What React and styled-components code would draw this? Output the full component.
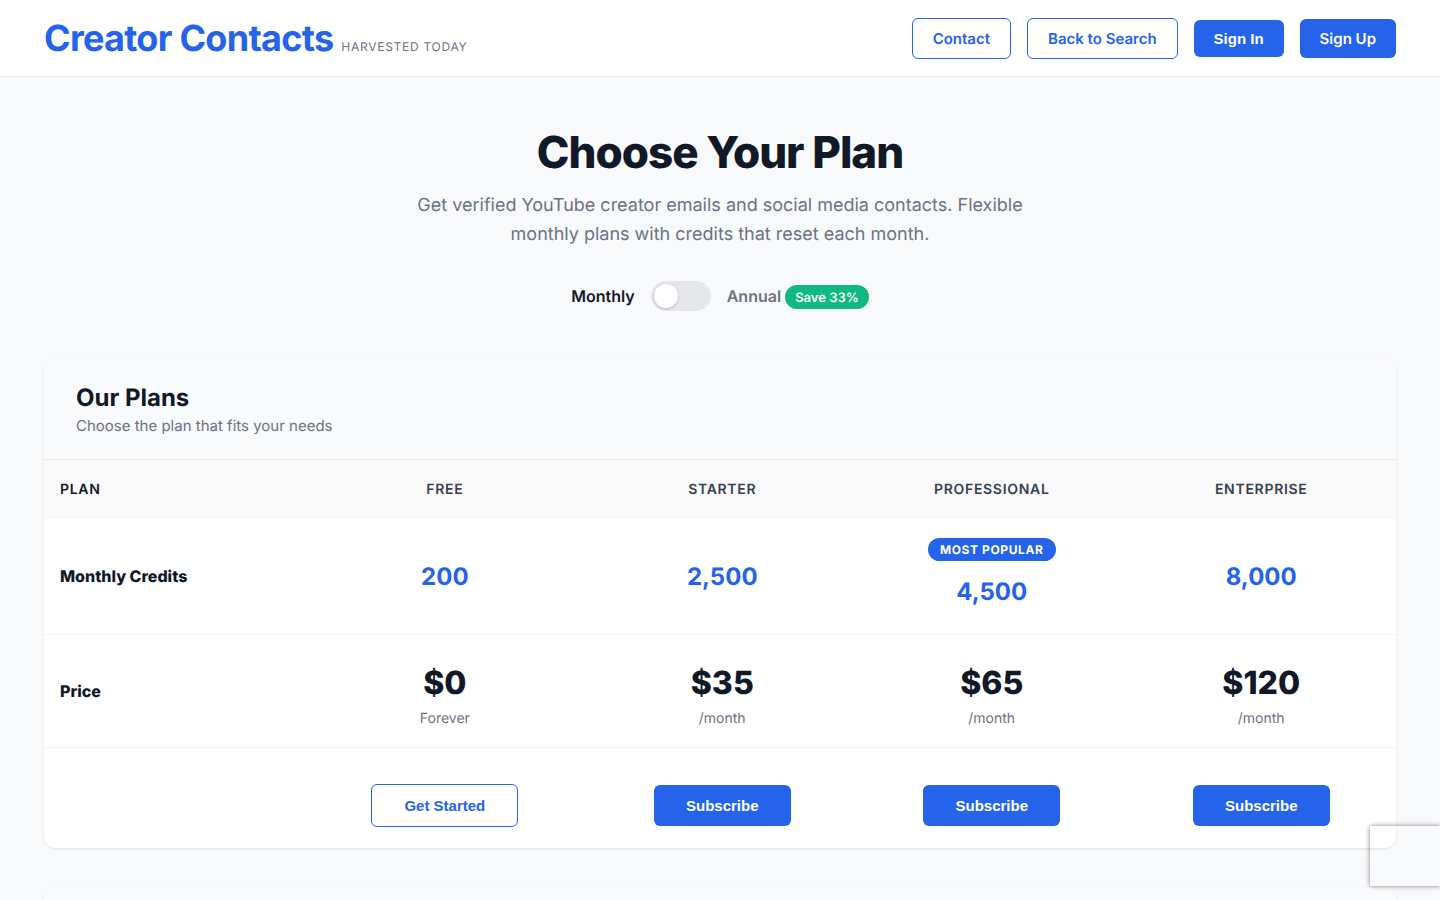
import React, { useState } from 'react'
import styled, { createGlobalStyle, css } from 'styled-components'

const plans = [
  { name: 'Free', credits: '200', price: '$0', period: 'Forever', cta: 'Get Started', outline: true },
  { name: 'Starter', credits: '2,500', price: '$35', period: '/month', cta: 'Subscribe' },
  { name: 'Professional', credits: '4,500', price: '$65', period: '/month', cta: 'Subscribe', popular: true },
  { name: 'Enterprise', credits: '8,000', price: '$120', period: '/month', cta: 'Subscribe' },
]

export default function App() {
  const [annual, setAnnual] = useState(false)

  return (
    <Page>
      <GlobalStyle />
      <Header>
        <Brand>
          <Logo href="#">Creator Contacts</Logo>
          <Tagline>Harvested today</Tagline>
        </Brand>
        <Nav>
          <NavLink href="#contact" $outline>Contact</NavLink>
          <NavLink href="#search" $outline>Back to Search</NavLink>
          <SignIn type="button">Sign In</SignIn>
          <NavLink href="#signup">Sign Up</NavLink>
        </Nav>
      </Header>
      <Main>
        <Hero>
          <Title>Choose Your Plan</Title>
          <Subtitle>
            Get verified YouTube creator emails and social media contacts. Flexible monthly plans
            with credits that reset each month.
          </Subtitle>
          <Billing>
            <BillingLabel htmlFor="billing" $active={!annual}>Monthly</BillingLabel>
            <Toggle
              id="billing"
              type="checkbox"
              role="switch"
              checked={annual}
              onChange={e => setAnnual(e.target.checked)}
            />
            <BillingLabel htmlFor="billing" $active={annual}>
              Annual <SaveBadge>Save 33%</SaveBadge>
            </BillingLabel>
          </Billing>
        </Hero>
        <Card>
          <CardHeader>
            <CardTitle>Our Plans</CardTitle>
            <CardText>Choose the plan that fits your needs</CardText>
          </CardHeader>
          <PlanTable>
            <colgroup>
              <PlanCol $width="19.1%" />
              <PlanCol $width="21.1%" />
              <PlanCol />
              <PlanCol />
              <PlanCol />
            </colgroup>
            <thead>
              <tr>
                <HeadCell scope="col" $first>Plan</HeadCell>
                {plans.map(plan => (
                  <HeadCell scope="col" key={plan.name}>{plan.name}</HeadCell>
                ))}
              </tr>
            </thead>
            <tbody>
              <tr>
                <RowLabel scope="row">Monthly Credits</RowLabel>
                {plans.map(plan => (
                  <Cell key={plan.name}>
                    {plan.popular && <PopularBadge>Most Popular</PopularBadge>}
                    <Credits>{plan.credits}</Credits>
                  </Cell>
                ))}
              </tr>
              <tr>
                <RowLabel scope="row">Price</RowLabel>
                {plans.map(plan => (
                  <Cell key={plan.name}>
                    <Price>{plan.price}</Price>
                    <Period>{plan.period}</Period>
                  </Cell>
                ))}
              </tr>
              <tr>
                <ActionCell />
                {plans.map(plan => (
                  <ActionCell key={plan.name}>
                    <PlanButton type="button" $outline={plan.outline}>{plan.cta}</PlanButton>
                  </ActionCell>
                ))}
              </tr>
            </tbody>
          </PlanTable>
        </Card>
        <Card>
          <CardHeader />
        </Card>
      </Main>
      <CaptchaBadge />
    </Page>
  )
}

const GlobalStyle = createGlobalStyle`
  * {
    box-sizing: border-box;
    margin: 0;
    padding: 0;
  }
  body {
    font-family: Inter, "Liberation Sans", sans-serif;
    font-size: 16px;
    text-rendering: geometricPrecision;
    color: #111827;
    background: #f8f9fb;
  }
`

const Page = styled.div`
  height: 100vh;
  overflow: hidden;
`

const Header = styled.header`
  display: flex;
  justify-content: space-between;
  align-items: center;
  padding: 16px 44px;
  background: white;
  border-bottom: 1px solid #e5e7eb;
`

const Brand = styled.div`
  display: flex;
  align-items: baseline;
  gap: 8px;
`

const Logo = styled.a`
  font-size: 36px;
  font-weight: 700;
  line-height: 44px;
  letter-spacing: -0.02em;
  color: #2563eb;
  text-decoration: none;
`

const Tagline = styled.span`
  font-size: 12px;
  letter-spacing: 0.06em;
  text-transform: uppercase;
  color: #6b7280;
`

const Nav = styled.nav`
  display: flex;
  align-items: center;
  gap: 16px;
`

const outlined = css`
  color: #2563eb;
  background: white;
  border: 1px solid #2563eb;
`

const filled = css`
  color: white;
  background: #2563eb;
  border: none;
`

const NavLink = styled.a`
  padding: 10px 20px;
  font-size: 15px;
  font-weight: 600;
  line-height: 19px;
  border-radius: 6px;
  text-decoration: none;
  ${props => (props.$outline ? outlined : filled)}
`

const SignIn = styled.button`
  padding: 10px 20px;
  font-family: "Liberation Sans", Arial, sans-serif;
  font-size: 15px;
  font-weight: 600;
  line-height: 17px;
  border-radius: 6px;
  cursor: pointer;
  ${filled}
`

const Main = styled.main`
  padding: 48px 44px 0;
`

const Hero = styled.section`
  display: flex;
  flex-direction: column;
  align-items: center;
  margin-bottom: 48px;
  text-align: center;
`

const Title = styled.h1`
  margin-bottom: 11px;
  font-size: 44px;
  font-weight: 800;
  line-height: 55px;
  letter-spacing: -1px;
`

const Subtitle = styled.p`
  max-width: 640px;
  margin-bottom: 32px;
  font-size: 18px;
  line-height: 29px;
  color: #6b7280;
`

const Billing = styled.div`
  display: flex;
  align-items: center;
  gap: 16px;
`

const BillingLabel = styled.label`
  font-weight: 600;
  line-height: 26px;
  color: ${props => (props.$active ? '#111827' : '#6b7280')};
`

const Toggle = styled.input`
  appearance: none;
  width: 60px;
  height: 30px;
  padding: 3px;
  border-radius: 15px;
  background: ${props => (props.checked ? '#2563eb' : '#e5e7eb')};
  cursor: pointer;

  &::before {
    content: '';
    display: block;
    width: 24px;
    height: 24px;
    margin-left: ${props => (props.checked ? '30px' : '0')};
    border-radius: 50%;
    background: white;
    box-shadow: 0 1px 3px rgba(0, 0, 0, 0.2);
  }
`

const SaveBadge = styled.span`
  display: inline-block;
  padding: 5px 10px 3px;
  font-size: 13px;
  line-height: 16px;
  color: white;
  background: #10b981;
  border-radius: 12px;
`

const Card = styled.section`
  margin-bottom: 40px;
  overflow: hidden;
  background: white;
  border-radius: 12px;
  box-shadow: 0 1px 3px rgba(0, 0, 0, 0.1);
`

const CardHeader = styled.div`
  min-height: 101px;
  padding: 24px 32px;
  background: #f9fafb;
  border-bottom: 1px solid #e5e7eb;
`

const CardTitle = styled.h2`
  margin-bottom: 4px;
  font-size: 24px;
  font-weight: 700;
  line-height: 29px;
`

const CardText = styled.p`
  font-size: 15px;
  line-height: 19px;
  color: #6b7280;
`

const PlanTable = styled.table`
  width: 100%;
  table-layout: fixed;
  border-collapse: collapse;
`

const PlanCol = styled.col`
  width: ${props => props.$width || 'auto'};
`

const HeadCell = styled.th`
  padding: 21px 16px 19px;
  font-size: 14px;
  font-weight: 600;
  line-height: 17px;
  letter-spacing: 0.05em;
  text-transform: uppercase;
  text-align: ${props => (props.$first ? 'left' : 'center')};
  color: ${props => (props.$first ? '#111827' : '#374151')};
  background: #fafafa;
  border-bottom: 1px solid #f3f4f6;
`

const Cell = styled.td`
  padding: 20px 16px;
  text-align: center;
  border-bottom: 1px solid #f3f4f6;
`

const RowLabel = styled.th`
  padding: 20px 16px;
  font-weight: 800;
  text-align: left;
  border-bottom: 1px solid #f3f4f6;
`

const ActionCell = styled.td`
  padding: 36px 16px 21px;
  text-align: center;
`

const PopularBadge = styled.div`
  width: max-content;
  padding: 4px 12px;
  margin: 0 auto 8px;
  font-size: 12px;
  font-weight: 700;
  line-height: 15px;
  letter-spacing: 0.05em;
  text-transform: uppercase;
  color: white;
  background: #2563eb;
  border-radius: 12px;
`

const Credits = styled.div`
  font-size: 24px;
  font-weight: 700;
  line-height: 45px;
  color: #2563eb;
`

const Price = styled.div`
  font-size: 32px;
  font-weight: 800;
  line-height: 55px;
`

const Period = styled.div`
  font-size: 14px;
  line-height: 17px;
  color: #6b7280;
`

const PlanButton = styled.button`
  padding: 12px 32px;
  font-family: "Liberation Sans", Arial, sans-serif;
  font-size: 15px;
  font-weight: 600;
  line-height: 17px;
  border-radius: 6px;
  cursor: pointer;
  ${props => (props.$outline ? outlined : filled)}
`

const CaptchaBadge = styled.aside`
  position: fixed;
  right: 0;
  bottom: 14px;
  width: 70px;
  height: 60px;
  border-radius: 2px 0 0 2px;
  box-shadow: 0 0 5px gray;
`
